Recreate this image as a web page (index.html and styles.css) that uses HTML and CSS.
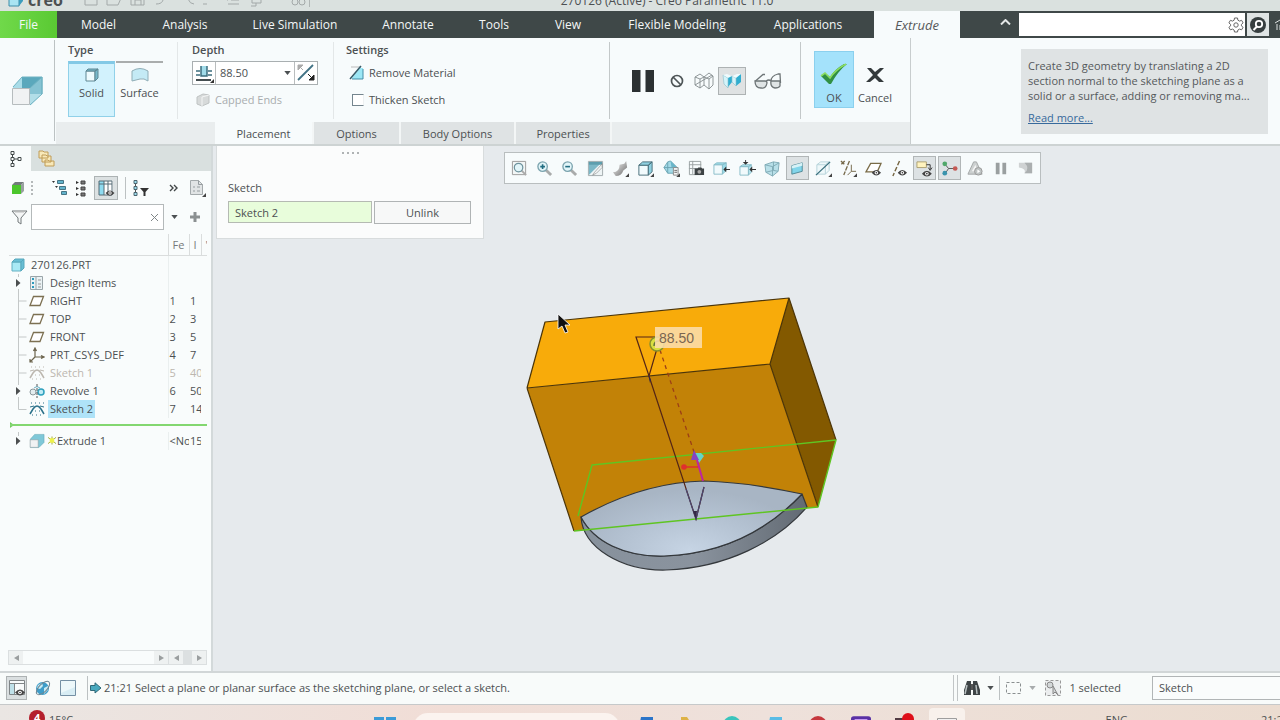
FILE: index.html
```html
<!DOCTYPE html>
<html lang="en">
<head>
<meta charset="utf-8">
<title>270126 (Active) - Creo Parametric 11.0</title>
<link rel="stylesheet" href="styles.css">
</head>
<body>
<svg class="defs" aria-hidden="true">
  <defs>
    <radialGradient id="steel" gradientUnits="userSpaceOnUse" cx="690" cy="550" r="120" gradientTransform="translate(0 275) scale(1 .5)"><stop offset="0" stop-color="#c6d4e4"/><stop offset=".6" stop-color="#b3c1d1"/><stop offset="1" stop-color="#a8b5c4"/></radialGradient>
    <linearGradient id="rim" x1="0" y1="0" x2="1" y2="0"><stop offset="0" stop-color="#87919c"/><stop offset=".5" stop-color="#8a939e"/><stop offset="1" stop-color="#626a73"/></linearGradient>
    <linearGradient id="chrome" x1="0" y1="0" x2="1" y2="1"><stop offset="0" stop-color="#fff"/><stop offset="1" stop-color="#666"/></linearGradient>
  </defs>
  <symbol id="plane" viewBox="0 0 16 14"><path d="M4.500 2.500h10l-3.500 9h-10z" fill="#fff" stroke="#7c7052" stroke-width="1.300"/></symbol>
  <symbol id="cube" viewBox="0 0 18 18"><path d="M2 5.500h10V16H2z" fill="#f2fbfd" stroke="#486d79"/><path d="M2 5.500L6 2h10l-4 3.500zM12 5.500L16 2v10.500L12 16z" fill="#8fd0e0" stroke="#486d79"/></symbol>
  <symbol id="sketch" viewBox="0 0 16 16"><path d="M1 13l3-5q4-6 8 0l3 5" fill="none" stroke="currentColor" stroke-width="1.500"/><path d="M1 6l4-1M11 5l4 1" stroke="currentColor"/><path d="M2 2h1M6 2h1M10 2h1M14 2h1M6 10h1M10 10h1M3 14h1M7 14h1M11 14h1" stroke="currentColor"/></symbol>
  <symbol id="caret" viewBox="0 0 8 5"><path d="M0 0h8L4 5z" fill="currentColor"/></symbol>
  <symbol id="eye" viewBox="0 0 12 8"><path d="M0 4Q6-3 12 4Q6 11 0 4z" fill="#444"/><circle cx="6" cy="4" r="2.200" fill="#fff"/><circle cx="6" cy="4" r="1" fill="#333"/></symbol>
  <symbol id="tee" viewBox="0 0 24 18"><path d="M9.500 0v18M9.500 9h8" stroke="#c4c8c8" fill="none"/></symbol>
  <symbol id="elbow" viewBox="0 0 24 18"><path d="M9.500 0v9.500h8" stroke="#c4c8c8" fill="none"/></symbol>
  <symbol id="branch" viewBox="0 0 24 18"><path d="M9.500 0v18" stroke="#c4c8c8"/><path d="M6 3h7v12H6z" fill="#f9fcfc"/><path d="M7 5l4.500 4L7 13z" fill="#4c4f50"/></symbol>
  <symbol id="trim" viewBox="0 0 24 18"><path d="M9.500 0v4" stroke="#c4c8c8"/><path d="M7 5l4.500 4L7 13z" fill="#4c4f50"/></symbol>
  <symbol id="zoomlens" viewBox="0 0 18 18"><path d="M10.500 10.500l5.500 5.500" stroke="#a9abab" stroke-width="3"/><circle cx="7" cy="7" r="5" fill="#e2f5f9" stroke="#7ba3ae" stroke-width="1.400"/></symbol>
</svg>

<header class="titlebar">
  <div class="brand">
    <svg width="16" height="14" viewBox="0 0 16 14"><path d="M1 5h10v8H1z" fill="#a9e4f2" stroke="#3e8da8"/><path d="M11 13l4-5V1l-4 4z" fill="#3d9dbd"/></svg>
    <span>creo</span>
  </div>
  <div class="quick">
    <svg width="224" height="14" viewBox="0 0 224 14" fill="none" stroke="#a3a9a9"><path d="M1 0h12v12H1zM23 0v12h11l4-9M47 0v12h13V0M51 12V7h6v5"/><path d="M72 11c7 0 8-4 7-10M110 11q-4 0-6-5M119 11h4M144 11h11M147 7h8M143 7h1M168 4h9v6h-9zM172 10v3h-5"/><circle cx="211" cy="9" r="3"/><circle cx="218" cy="9" r="3"/></svg>
  </div>
  <h1>270126 (Active) - Creo Parametric 11.0</h1>
</header>

<nav class="menubar" aria-label="Ribbon tabs">
  <button class="file">File</button>
  <button>Model</button>
  <button>Analysis</button>
  <button>Live Simulation</button>
  <button>Annotate</button>
  <button>Tools</button>
  <button>View</button>
  <button>Flexible Modeling</button>
  <button>Applications</button>
  <button class="current">Extrude</button>
  <div class="menu-right">
    <button class="collapse" aria-label="Minimize ribbon"><svg width="11" height="6" viewBox="0 0 11 6"><path d="M1 5.500L5.500 1 10 5.500" fill="none" stroke="#e3e6e6" stroke-width="2"/></svg></button>
    <div class="command-search">
      <input type="text" aria-label="Search commands">
      <svg width="16" height="16" viewBox="0 0 16 16" fill="none" stroke="#666"><path d="M6.500 1h3l.4 2.200 1.600.9 2.100-.8 1.500 2.600L13.400 7.400v1.500l1.700 1.400-1.500 2.500-2.100-.7-1.600.9L9.500 15h-3l-.4-2-1.600-.9-2.100.7L.9 10.300l1.700-1.400V7.400L.9 5.900l1.500-2.600 2.100.8 1.600-.9z"/><circle cx="8" cy="8" r="2.200"/></svg>
    </div>
    <button class="find" aria-label="Search"><svg width="18" height="18" viewBox="0 0 18 18"><circle cx="9" cy="9" r="8" fill="#363e3f"/><circle cx="10" cy="8" r="3.200" fill="none" stroke="#fff" stroke-width="1.800"/><path d="M8 10.500L4.500 14" stroke="#fff" stroke-width="2"/></svg></button>
    <svg class="learn" width="5" height="16" viewBox="0 0 5 16"><path d="M0 6l5-3h5M2 7v6M5 8h5v5H5z" stroke="#dde1e1" fill="none"/></svg>
  </div>
</nav>

<section class="ribbon">
  <div class="feature-icon">
    <svg width="32" height="34" viewBox="0 0 32 34"><path d="M11 3h20v17H11z" fill="#5ba8bc"/><path d="M2 13L11 3v17l-9 10z" fill="#a9dce8"/><path d="M11 20h20L20 31H2z" fill="#c9eaf1"/><path d="M31 3v17L19 31V14z" fill="#a3d6e3" fill-opacity=".6"/><path d="M2 13L11 3h20M19 14L31 3v17L19 31M31 3v17" fill="none" stroke="#6fb2c2"/><path d="M1.500 14.500h17v16h-17z" fill="#f0f2f3" stroke="#b6bcbe"/></svg>
  </div>
  <div class="ribbon-body">
    <div class="groups">
      <div class="group">
        <h2>Type</h2>
        <div class="types">
          <button class="type on"><svg width="16" height="16" viewBox="0 0 16 16"><path d="M2 4h9v10H2z" fill="#eefbfe" stroke="#5f8793"/><path d="M2 4l2-2h10l-3 2zM11 4l3-2v9l-3 3z" fill="#76b9cb" stroke="#5f8793"/></svg>Solid</button>
          <button class="type"><svg width="18" height="16" viewBox="0 0 18 16"><path d="M1 14V4q8-5 16 0v10q-4-3-8-2T1 14z" fill="#c4eaf5" stroke="#8fadb6"/></svg>Surface</button>
        </div>
      </div>
      <div class="group">
        <h2>Depth</h2>
        <div class="depth">
          <button aria-label="Depth option"><svg width="20" height="20" viewBox="0 0 20 20"><path d="M2 17h15" stroke="#454e51" stroke-width="2"/><path d="M7 3v10h6V3M2 8h4M2 12h4M14 8h4M14 12h4" fill="#a1dbe9" stroke="#3d6d7d" stroke-width="1.500"/><path d="M20 16v4h-4z" fill="#333"/></svg></button>
          <input type="text" aria-label="Depth value" value="88.50">
          <button class="drop" aria-label="Recent values"><svg width="7" height="4"><use href="#caret"/></svg></button>
          <button aria-label="Flip direction"><svg width="20" height="20" viewBox="0 0 20 20"><path d="M2 17L17 2" stroke="#427386" stroke-width="1.800"/><path d="M2 2h5L2 7zM3 3l4 4" fill="#aaa" stroke="#aaa"/><path d="M18 17h-5l5-5zM12 11l5 5" fill="#222" stroke="#222"/></svg></button>
        </div>
        <button class="capped" disabled><svg width="14" height="14" viewBox="0 0 14 14"><path d="M1 4l6-3 6 1v8l-7 3-5-2z" fill="#d7dada" stroke="#bfc3c3"/><path d="M6 4v9M6 4l7-2" stroke="#f4f5f5"/></svg>Capped Ends</button>
      </div>
      <div class="group settings">
        <h2>Settings</h2>
        <button class="remove"><svg width="16" height="16" viewBox="0 0 16 16"><path d="M2 2h10" stroke="#bbb"/><path d="M3 13L11 3h3v11H3z" fill="#9ce7f5"/><path d="M3 14h11V4" fill="none" stroke="#458da6"/><path d="M1 14L12 1" stroke="#365b69" stroke-width="1.500"/></svg>Remove Material</button>
        <label class="thicken"><input type="checkbox">Thicken Sketch</label>
      </div>
      <div class="group preview">
        <button aria-label="Pause"><svg width="22" height="22" viewBox="0 0 22 22"><path d="M0 0h8.500v22H0zM13.500 0H22v22h-8.500z" fill="#2b3032"/></svg></button>
        <button aria-label="No preview"><svg width="14" height="14" viewBox="0 0 14 14" fill="none" stroke="#4e5557" stroke-width="1.700"><circle cx="7" cy="7" r="5.500"/><path d="M3 3l8 8"/></svg></button>
        <button aria-label="Unattached"><svg width="20" height="18" viewBox="0 0 20 18" fill="none" stroke="#858c8f" stroke-width=".9"><path d="M1 5l5-3 4 3v8l-4 3-5-3zM1 5l5 2 4-2M6 7v9M10 5l5 2 4-3-4-3-5 4M15 7v10l4-4V4M10 13l5 4M1 13l17-10"/></svg></button>
        <button class="on" aria-label="Attached"><svg width="20" height="18" viewBox="0 0 20 18"><path d="M1 3l9 1v6l-4 5V7zM11 4l8-2v8l-5 4V6z" fill="#30aed0"/><path d="M1 3l5 3v10l-4-4zM10 4l4 2v8l-4-4z" fill="#d5f4fa" stroke="#8bbdca" stroke-width=".6"/><path d="M1 3l4-1 5 2-4 2zM10 4l5-2h4l-5 4z" fill="#f1fbfd"/></svg></button>
        <button aria-label="Verify"><svg width="28" height="18" viewBox="0 0 28 18" fill="none" stroke="#6e7577" stroke-width="1.300"><path d="M1.500 9L9 2.500h2M17 9q0-5 7-7h2l.5 9"/><path d="M1 9h10q2 0 2 2-1 6-6 5-6 0-6-7zM17 9h9v5q-1 2-5 2-5-1-4-7zM12 9q3-2 5 0" fill="#dfe4e5"/></svg></button>
      </div>
      <div class="group confirm">
        <button class="on"><svg width="28" height="22" viewBox="0 0 28 22"><path d="M1 13l4-3 5 4q5-8 14-13h3Q18 8 11 21H9z" fill="#319044"/><path d="M1 13l4-3 5 5Q15 7 26 1" fill="none" stroke="#8bdc61" stroke-width="1.600"/></svg>OK</button>
        <button><svg width="20" height="20" viewBox="0 0 20 20"><path d="M2 3h4l4 4 5-4h4l-7 7 7 7h-5l-4-4-5 4H1l7-7z" fill="#33393b"/></svg>Cancel</button>
      </div>
    </div>
    <div class="dash-tabs">
      <button class="on">Placement</button><button>Options</button><button>Body Options</button><button>Properties</button>
    </div>
  </div>
  <div class="ribbon-help">
    <div class="help-card">
      <p>Create 3D geometry by translating a 2D<br>section normal to the sketching plane as a<br>solid or a surface, adding or removing ma...</p>
      <a href="#">Read more...</a>
    </div>
  </div>
</section>

<main class="workspace">
  <aside class="navigator">
    <div class="nav-tabs">
      <button class="on" aria-label="Model tree"><svg width="14" height="18" viewBox="0 0 14 18" fill="none" stroke="#424849"><path d="M2 1.500h3v3H2zM2 7.500h3v3H2zM2 13.500h3v3H2zM9 7.500h3v3H9zM3.500 5v2M3.500 11v2M5 9h4"/></svg></button>
      <button aria-label="Folder browser"><svg width="18" height="18" viewBox="0 0 18 18" fill="#f7e8b9" stroke="#c09c57"><path d="M1 3V1h4l1 1h4v6H1zM4 8V5h4l1 1h4v6H4zM7 13v-3h3l1 1h5v5H7z"/></svg></button>
    </div>
    <div class="nav-tools">
      <svg width="14" height="16" viewBox="0 0 14 16"><path d="M1 5h9v9H1z" fill="#4cc62c"/><path d="M1 5l3-3h9l-3 3z" fill="#737b7b"/><path d="M10 5l3-3v9l-3 3z" fill="#99a0a0"/></svg>
      <span class="grip"></span>
      <button aria-label="Expand"><svg width="18" height="18" viewBox="0 0 18 18"><path d="M1 2h3L2.500 4zM4 7h3L5.500 9z" fill="#333"/><path d="M6.500 1.500h6v3h-6zM8.500 7.500h6v3h-6zM10.500 12.500h5v3h-5z" fill="#62b3cc" stroke="#477584"/></svg></button>
      <button aria-label="Collapse"><svg width="12" height="18" viewBox="0 0 12 18"><path d="M1 2l3 1.500L1 5zM1 8l3 1.500L1 11zM1 14l3 1.500L1 17z" fill="#333"/><path d="M6 2h4v3H6zM6 8h4v3H6zM6 14h4v3H6z" fill="#777" stroke="#444"/></svg></button>
      <button class="on" aria-label="Tree columns"><svg width="18" height="18" viewBox="0 0 18 18"><path d="M2 2h14v14H2z" fill="#fff"/><path d="M2 2h5v14H2z" fill="#8edbf0"/><path d="M2 2h13v14H2zM2 5h13M7 2v14M11 2v14" fill="none" stroke="#546b75"/><use href="#eye" x="8" y="11" width="10" height="6"/></svg></button>
      <span class="rule"></span>
      <button aria-label="Tree filters"><svg width="18" height="18" viewBox="0 0 18 18"><path d="M3.500 4v9" stroke="#555"/><path d="M2 1.500h3v3H2zM2 7.500h3v3H2zM2 13.500h3v3H2z" fill="#9cdced" stroke="#4c656f"/><path d="M8 9h9l-3.500 4v4h-2v-4z" fill="#333"/></svg></button>
      <button class="more" aria-label="More"><svg width="10" height="8" viewBox="0 0 10 8" fill="none" stroke="#434849" stroke-width="1.400"><path d="M1 1l3 3-3 3M5 1l3 3-3 3"/></svg></button>
      <button aria-label="Report"><svg width="17" height="18" viewBox="0 0 17 18"><path d="M1.500 1.500h8l4 4v10h-12z" fill="#e1e4e5" stroke="#a4aaac"/><path d="M9.500 1.500v4h4M4 8h2M8 8h3M4 12h2M8 12h3" stroke="#969da0" fill="none"/><path d="M17 14v4h-4z" fill="#444"/></svg></button>
    </div>
    <div class="nav-filter">
      <svg width="17" height="17" viewBox="0 0 17 17" fill="#f4f6f6" stroke="#73797b"><path d="M1 2h15l-6 7v6l-3-2V9z"/><path d="M4 3h9" stroke="#bbb"/></svg>
      <div class="filter-box">
        <input type="text" aria-label="Filter tree">
        <button aria-label="Clear"><svg width="9" height="9" viewBox="0 0 9 9"><path d="M1 1l7 7M8 1L1 8" stroke="#808688"/></svg></button>
      </div>
      <button aria-label="Filter options"><svg width="7" height="4"><use href="#caret"/></svg></button>
      <button aria-label="Add"><svg width="12" height="12" viewBox="0 0 12 12"><path d="M4.500 1h3v3.500H11v3H7.500V11h-3V7.500H1v-3h3.500z" fill="#8b9091"/></svg></button>
    </div>
    <table class="tree">
      <colgroup><col class="c-name"><col class="c-feat"><col class="c-id"><col class="c-rest"></colgroup>
      <thead><tr><th aria-label="Name"></th><th>Fe</th><th>I</th><th>'</th></tr></thead>
      <tbody>
        <tr><td><span class="node root"><svg width="16" height="16" viewBox="0 0 16 16"><path d="M2 5h9v9H2z" fill="#a9e9f5" stroke="#65b0c2"/><path d="M2 5l3-3h9l-3 3zM11 5l3-3v9l-3 3z" fill="#69bed4" stroke="#59a9bd"/></svg><span>270126.PRT</span></span></td><td></td><td></td><td></td></tr>
        <tr><td><span class="node"><svg width="24" height="18"><use href="#branch"/></svg><svg width="16" height="16" viewBox="0 0 16 16"><path d="M1.500 1.500h12v13h-12z" fill="#eaf2f4" stroke="#9aa5a9"/><path d="M4 3v11" stroke="#2f9abc" stroke-width="2" stroke-dasharray="2 2"/><path d="M7 2v12" stroke="#9aa5a9"/><path d="M9 5h3M9 9h3M9 12h3" stroke="#999"/></svg><span>Design Items</span></span></td><td></td><td></td><td></td></tr>
        <tr><td><span class="node"><svg width="24" height="18"><use href="#tee"/></svg><svg width="16" height="14"><use href="#plane"/></svg><span>RIGHT</span></span></td><td>1</td><td>1</td><td></td></tr>
        <tr><td><span class="node"><svg width="24" height="18"><use href="#tee"/></svg><svg width="16" height="14"><use href="#plane"/></svg><span>TOP</span></span></td><td>2</td><td>3</td><td></td></tr>
        <tr><td><span class="node"><svg width="24" height="18"><use href="#tee"/></svg><svg width="16" height="14"><use href="#plane"/></svg><span>FRONT</span></span></td><td>3</td><td>5</td><td></td></tr>
        <tr><td><span class="node"><svg width="24" height="18"><use href="#tee"/></svg><svg width="16" height="16" viewBox="0 0 16 16"><path d="M6 1v9h9M6 10l-5 5M4.500 4L6 1l1.500 3M12 8.500l3 1.500-3 1.500M1 12v3h3" fill="none" stroke="#6c644d" stroke-width="1.200"/></svg><span>PRT_CSYS_DEF</span></span></td><td>4</td><td>7</td><td></td></tr>
        <tr class="suppressed"><td><span class="node"><svg width="24" height="18"><use href="#tee"/></svg><svg width="16" height="16"><use href="#sketch"/></svg><span>Sketch 1</span></span></td><td>5</td><td>40</td><td></td></tr>
        <tr><td><span class="node"><svg width="24" height="18"><use href="#branch"/></svg><svg width="16" height="16" viewBox="0 0 16 16"><circle cx="4" cy="9" r="3" fill="#e4edef" stroke="#8b989c"/><circle cx="12" cy="9" r="3" fill="#bfeaf5" stroke="#2ea0bd" stroke-width="1.500"/><path d="M8 1v14" stroke="#555" stroke-dasharray="3 1"/><path d="M5 5q3-3 6 0" fill="none" stroke="#6badc0"/></svg><span>Revolve 1</span></span></td><td>6</td><td>50</td><td></td></tr>
        <tr class="selected"><td><span class="node"><svg width="24" height="18"><use href="#elbow"/></svg><svg width="16" height="16"><use href="#sketch"/></svg><span>Sketch 2</span></span></td><td>7</td><td>14</td><td></td></tr>
        <tr class="insert"><td colspan="4"><svg width="100%" height="6"><path d="M1 0l4 3-4 3z" fill="#72c95f"/><rect x="1" y="2" width="100%" height="2" fill="#83d770"/></svg></td></tr>
        <tr><td><span class="node"><svg width="24" height="18"><use href="#trim"/></svg><svg width="16" height="16" viewBox="0 0 32 34"><path d="M2 13L11 3h20v17L20 31H2z" fill="#7fc8d8" stroke="#559fae"/><path d="M1.500 14.500h17v16h-17z" fill="#f0f2f3" stroke="#8d9496"/></svg><svg class="fresh" width="8" height="9" viewBox="0 0 9 9"><path d="M0 1l9 7M9 1L0 8M4.500 0v9" stroke="#9aa22c"/><path d="M2 2h5v5H2z" fill="#eef24a"/></svg><span>Extrude 1</span></span></td><td class="wide">&lt;No</td><td>153</td><td></td></tr>
      </tbody>
    </table>
    <div class="nav-scroll">
      <div class="scroll"><button aria-label="Scroll names left"><i class="left"></i></button><span></span><button aria-label="Scroll names right"><i class="right"></i></button></div>
      <div class="scroll short"><button aria-label="Scroll columns left"><i class="left"></i></button><span></span><button aria-label="Scroll columns right"><i class="right"></i></button></div>
    </div>
  </aside>

  <section class="canvas" aria-label="Graphics area">
    <svg class="model" viewBox="213 146 1067 525">
      <g stroke-linejoin="round">
        <path d="M545 322L789 298L770 364L527 388z" fill="#f8ab0a"/>
        <path d="M527 388L770 364L818 507L574 531z" fill="#c28207"/>
        <path d="M789 298L836 440L818 507L770 364z" fill="#835900"/>
        <path d="M527 388L545 322L789 298L836 440M527 388L770 364L789 298M527 388L574 531M770 364L818 507" fill="none" stroke="#4c3508" stroke-width="1.200"/>
        <path d="M581 517C583 548 622 571 666 570C726 568 777 542 807 507L802 494C766 532 720 554 664 556C625 557 594 542 581 517z" fill="url(#rim)" stroke="#34383c" stroke-width="1.200"/>
        <path d="M581 517C620 495 660 482 704 481C737 482 770 487 802 494C766 532 720 554 664 556C625 557 594 542 581 517z" fill="url(#steel)" stroke="#34383c" stroke-width="1.200"/>
        <path d="M574 531L818 507L836 440L592 465L578 516" fill="none" stroke="#5fc522" stroke-width="1.400"/>
      </g>
      <path d="M655 337H636L649 376L658 345M649 376L696 519L704 487" fill="none" stroke="#542516" stroke-width="1.200"/>
      <path d="M686 489L696 519L704 487" fill="none" stroke="#4a4670" stroke-width="1.200"/>
      <path d="M648 374l2 9 1-3zM693 511l3 8 1-8z" fill="#342846"/>
      <path d="M660 350L695 455" stroke="#9c3f16" stroke-width="1.300" stroke-dasharray="4 4" fill="none"/>
      <path d="M684 467h14" stroke="#df302d" stroke-width="1.500"/><circle cx="684" cy="467" r="2.800" fill="#df302d"/>
      <path d="M694 453h7l3 3-5 7z" fill="#65d5c6"/><path d="M697 460l6 21" stroke="#bd24a0" stroke-width="2"/><path d="M694 450l-3 10h8z" fill="#8644c3"/>
      <circle cx="657" cy="344" r="7" fill="#d9df42" stroke="#87902b" stroke-width="1.500"/><path d="M654 346q0-5 5-5" fill="none" stroke="#64733c" stroke-width="1.500"/>
      <path d="M655 327h47v21h-47z" fill="#fbddac" fill-opacity=".88"/>
      <text x="659" y="343" class="dimension">88.50</text>
      <path d="M558 314v15l4-3 3 7 3-1-3-7h5z" fill="#111" stroke="#fff" stroke-width=".8"/>
    </svg>
    <form class="placement">
      <div class="dots"><i></i><i></i><i></i><i></i></div>
      <label for="sketch-ref">Sketch</label>
      <div class="pick"><input id="sketch-ref" type="text" value="Sketch 2"><button type="button">Unlink</button></div>
    </form>
    <div class="view-tools">
      <button aria-label="Refit"><svg viewBox="0 0 18 18"><path d="M1.500 1.500h14v14h-14z" fill="#f2f6f6" stroke="#999"/><path d="M11 11l5 5" stroke="#aaa" stroke-width="2"/><circle cx="8" cy="8" r="4.500" fill="#e2f5f9" stroke="#6d929d" stroke-width="1.300"/></svg></button>
      <button aria-label="Zoom in"><svg viewBox="0 0 18 18"><use href="#zoomlens"/><path d="M4.500 7h5M7 4.500v5" stroke="#226d82" stroke-width="1.700"/></svg></button>
      <button aria-label="Zoom out"><svg viewBox="0 0 18 18"><use href="#zoomlens"/><path d="M4.500 7h5" stroke="#226d82" stroke-width="1.700"/></svg></button>
      <button aria-label="Repaint"><svg viewBox="0 0 18 18"><path d="M1.500 1.500h15v15h-15z" fill="#eef4f5" stroke="#a0aaac"/><path d="M2 2h14L2 16z" fill="#7db8c7"/><path d="M2 2h14v3H2z" fill="#5d9eae"/><path d="M16 4l-8 9-2 3 4-2 6-6z" fill="#f2f5f5" stroke="#666" stroke-width=".5"/></svg></button>
      <button aria-label="Rendering"><svg viewBox="0 0 18 18"><path d="M1 13q7 0 7-8l5-1 2-3 1 7-4 3q-2 6-8 6z" fill="url(#chrome)"/><path d="M18 14v4h-4z" fill="#444"/></svg></button>
      <button aria-label="Display style"><svg viewBox="0 0 18 18"><use href="#cube"/><path d="M18 14v4h-4z" fill="#444"/></svg></button>
      <button aria-label="Saved orientations"><svg viewBox="0 0 18 18"><path d="M1 8l4-6 3-1 7 7-2 6H5z" fill="#a3dae7" stroke="#6ba5b3"/><path d="M8 1l7 7H9z" fill="#69b5c8"/><path d="M1 8h14M5 2v6M5 8v6" stroke="#6ba5b3"/><path d="M11 8h5v8h-5z" fill="#f5f6f6" stroke="#888"/><path d="M12 11h3M12 13h3" stroke="#666"/><path d="M18 14v4h-4z" fill="#444"/></svg></button>
      <button aria-label="View manager"><svg viewBox="0 0 18 18"><path d="M1.500 1.500h12v14h-12zM1 5h13M1 9h13M5 1v14" fill="none" stroke="#9aa1a3"/><path d="M7 9h3l1-1h3l1 1h2v7H7z" fill="#3d4345"/><circle cx="12" cy="12.500" r="2" fill="#aaa"/></svg></button>
      <button aria-label="Section"><svg viewBox="0 0 18 18"><path d="M1 5h9v10H1z" fill="#f1fafc" stroke="#89bdc9"/><path d="M1 5l3-2h10l-4 2zM10 5l4-2v8l-4 4z" fill="#9bdbe9" stroke="#89bdc9"/><path d="M14 7v6l-3-3zM13 9.500h5v1h-5z" fill="#333"/></svg></button>
      <button aria-label="Active annotation"><svg viewBox="0 0 18 18"><path d="M1 7h9v9H1z" fill="#f1fafc" stroke="#89bdc9"/><path d="M1 7l3-2h9l-3 2zM10 7l3-2v8l-3 3z" fill="#b3e3ed" stroke="#89bdc9"/><path d="M6.500 0h1v2H10L7 5 4 2h2.500zM14 7v6l-3-3zM13 9.500h5v1h-5z" fill="#333"/></svg></button>
      <button aria-label="Perspective"><svg viewBox="0 0 18 18"><path d="M1 5l9-3 6 1-1 9-6 5-7-4z" fill="#b9e0e9" stroke="#7fabb6"/><path d="M1 5l8 2v10M9 7l7-4M10 2v9l-8 2M10 11l5 1" fill="none" stroke="#7fabb6"/></svg></button>
      <button class="on" aria-label="Plane fill"><svg viewBox="0 0 18 18"><path d="M3 6l11-3v9L3 15z" fill="#82d5ea" stroke="#508896"/><path d="M3 6l11-3v3L3 9z" fill="#d7f2f7"/></svg></button>
      <button aria-label="Model edges"><svg viewBox="0 0 18 18"><path d="M2 5h9v10H2zM2 5l4-3h9l-4 3M15 2v9l-4 4" fill="#eef8fa" stroke="#b6d3da"/><path d="M1 16L16 2" stroke="#386e7c" stroke-width="1.400"/><path d="M18 14v4h-4z" fill="#444"/></svg></button>
      <button aria-label="Datum filters"><svg viewBox="0 0 18 18"><path d="M1 1l4 4M5 1L1 5M10 1L4 16" stroke="#756849" stroke-width="1.400" stroke-dasharray="5 1"/><path d="M12 5v7h5M12 12l-4 4" stroke="#756849" fill="none"/><path d="M18 14v4h-4z" fill="#444"/></svg></button>
      <button aria-label="Plane display"><svg viewBox="0 0 18 18"><path d="M6 3.500h11l-4 9H1z" fill="#fff" stroke="#7a6c48" stroke-width="1.400"/><use href="#eye" x="7" y="10" width="10" height="7"/></svg></button>
      <button aria-label="Axis display"><svg viewBox="0 0 18 18"><path d="M9 1L2 17" stroke="#756541" stroke-width="1.500" stroke-dasharray="5 2"/><use href="#eye" x="7" y="10" width="10" height="7"/></svg></button>
      <button class="on" aria-label="Annotation display"><svg viewBox="0 0 18 18"><path d="M1 2h10v6H1z" fill="#fff3be" stroke="#ab9f72"/><path d="M11 5h4v5M13 8l2 3 2-3" fill="none" stroke="#333"/><use href="#eye" x="6" y="11" width="11" height="7"/></svg></button>
      <button class="on" aria-label="Spin center"><svg viewBox="0 0 18 18"><path d="M3 3l5 6-4 6M8 9h7" stroke="#555" fill="none"/><circle cx="4" cy="4" r="2.500" fill="#50a86b"/><circle cx="4" cy="14" r="2.500" fill="#3a94ad"/><circle cx="15" cy="9" r="2.500" fill="#c45a55"/></svg></button>
      <button disabled aria-label="Simulate"><svg viewBox="0 0 18 18"><path d="M1 15L7 2h3l6 13z" fill="#ccd0d0" stroke="#a1a6a6"/><path d="M5 12l4-7 2 7z" fill="#f3f4f4"/><circle cx="12" cy="12" r="4" fill="#bfc4c4" stroke="#999"/><path d="M11 10l3 2-3 2z" fill="#fff"/></svg></button>
      <button disabled aria-label="Pause simulation"><svg viewBox="0 0 18 18"><path d="M4 3h4v12H4zM11 3h4v12h-4z" fill="#9a9fa0"/></svg></button>
      <button disabled aria-label="Results"><svg viewBox="0 0 18 18"><path d="M2 3h14v11H8q2-5-6-6z" fill="#cfd2d3"/><path d="M8 3h8v11H8q6-5 0-11z" fill="#abafb0"/></svg></button>
    </div>
  </section>
</main>

<footer class="status">
  <button class="on" aria-label="Navigator"><svg width="18" height="18" viewBox="0 0 18 18"><path d="M1.500 1.500h15v14h-15z" fill="#f8fbfb" stroke="#7f8587"/><path d="M1.500 4.500h15M6.500 4.500v11" stroke="#7f8587"/><path d="M2 5h4v10H2z" fill="#bfe1e9"/><use href="#eye" x="7" y="10" width="10" height="7"/></svg></button>
  <button aria-label="Browser"><svg width="18" height="18" viewBox="0 0 18 18"><circle cx="8.500" cy="9.500" r="6.500" fill="#3f9dc9"/><path d="M4 6l4-2 1 3-3 3-3-1zM10 9l4-2v4l-4 4z" fill="#c9ecf4"/><ellipse cx="9" cy="9" rx="8.500" ry="4" transform="rotate(-45 9 9)" fill="none" stroke="#6e8590"/></svg></button>
  <button aria-label="Full screen"><svg width="18" height="18" viewBox="0 0 18 18"><path d="M1.500 1.500h15v15h-15z" fill="#d8edf4" stroke="#7590a4"/><path d="M2 2h14v6L2 14z" fill="#edf8fa"/></svg></button>
  <span class="rule"></span>
  <svg width="12" height="12" viewBox="0 0 12 12"><path d="M.500 3.500H5V.800L11 6l-6 5V8.500H.500z" fill="#48a9be" stroke="#306979"/></svg>
  <p>21:21 Select a plane or planar surface as the sketching plane, or select a sketch.</p>
  <div class="selection">
    <span class="double-rule"></span>
    <button aria-label="Find"><svg width="18" height="18" viewBox="0 0 18 18"><path d="M4 2h4v14H1v-5zM10 2h4l3 9v5h-7z" fill="#3e4446"/><path d="M8 5h2v6H8z" fill="#555"/><path d="M4 6L2 15M13 6l1 9" stroke="#b8c0c1" stroke-width="1.500"/></svg><svg width="7" height="4"><use href="#caret"/></svg></button>
    <span class="rule"></span>
    <button aria-label="Box selection" class="dim"><svg width="18" height="16" viewBox="0 0 18 16"><path d="M1.500 2.500h14v11h-14z" fill="none" stroke="#8a8f90" stroke-dasharray="3 2"/></svg><svg width="7" height="4"><use href="#caret"/></svg></button>
    <svg width="18" height="18" viewBox="0 0 18 18"><path d="M1.500 1.500h15v15h-15z" fill="#ebedee" stroke="#999" stroke-dasharray="3 2"/><circle cx="6" cy="6" r="3" fill="#d3d7d8" stroke="#888"/><path d="M9 7v8l2-2 3 3z" fill="#d3d7d8" stroke="#888"/></svg>
    <span class="count">1 selected</span>
    <select aria-label="Selection filter"><option>Sketch</option></select>
  </div>
</footer>

<div class="taskbar">
  <div class="weather"><svg width="20" height="18" viewBox="0 0 20 18"><path d="M0 12h8v6H0z" fill="#77649e"/><circle cx="12" cy="8" r="8" fill="#b4202d"/><text x="9" y="12" class="badge">4</text></svg><span>15°C</span></div>
  <svg class="start" width="24" height="16" viewBox="0 0 24 16"><path d="M1 5h10v11H1zM13 5h10v11H13z" fill="#3b9bd8"/></svg>
  <div class="search-pill"></div>
  <div class="apps">
    <svg viewBox="0 0 20 16"><path d="M5 5h12v11H3z" fill="#2b74c9"/></svg>
    <svg viewBox="0 0 20 16"><path d="M2 5h6l2 3h7v8H2z" fill="#deb246"/></svg>
    <svg viewBox="0 0 20 16"><circle cx="10" cy="13" r="9" fill="#3ac4bc"/></svg>
    <svg viewBox="0 0 20 16"><path d="M5 5h12v11H3z" fill="#59bce6"/></svg>
    <svg viewBox="0 0 20 16"><circle cx="10" cy="13" r="9" fill="#c5373d"/></svg>
    <svg viewBox="0 0 22 16"><rect y="4" width="22" height="16" rx="3" fill="#5930a5"/><path d="M5 8h12v8H5z" fill="none" stroke="#c59af0" stroke-width="2"/></svg>
    <svg viewBox="0 0 20 16"><path d="M1 6h12v10H1z" fill="#513b44"/><circle cx="14" cy="7" r="6" fill="#de0e19"/></svg>
    <span class="app-on"><svg viewBox="0 0 22 16"><path d="M.500 6.500h21V18H.500z" fill="#fff" stroke="#888"/></svg></span>
  </div>
  <span class="lang">ENG</span>
  <span class="clock">21:21</span>
</div>
</body>
</html>
```
FILE: styles.css
```css
* { box-sizing: border-box; }
body {
  margin: 0;
  height: 100vh;
  display: flex;
  flex-direction: column;
  overflow: hidden;
  background: #e6eaed;
  color: #4c5052;
  font: 11px/16px "Open Sans", "Noto Sans", sans-serif;
}
h1, h2, p { margin: 0; font-size: inherit; font-weight: inherit; }
button, input, select { font: inherit; color: inherit; }
button {
  display: flex;
  align-items: center;
  justify-content: center;
  margin: 0;
  padding: 0;
  border: 0;
  background: none;
}
input { min-width: 0; margin: 0; outline: 0; }
svg { display: block; flex: none; }
.defs { position: absolute; width: 0; height: 0; }

/* Title bar */
.titlebar {
  flex: none;
  height: 11px;
  display: grid;
  grid-template-columns: 84px 226px 1fr 226px 80px;
  grid-template-rows: 100%;
  align-items: end;
  overflow: hidden;
  background: #dae1df;
  padding-bottom: 4px;
}
.brand { display: flex; align-items: flex-end; gap: 4px; padding-left: 8px; font-weight: 700; font-size: 16px; line-height: 14px; }
.quick { border-right: 1px solid #b0b6b5; }
.titlebar h1 { grid-column: 3 / 4; text-align: center; font-size: 12px; line-height: 12px; padding-left: 50px; }

/* Ribbon tabs */
.menubar {
  flex: none;
  height: 27px;
  display: grid;
  grid-template-columns: 57px 83px 90px 130px 96px 76px 72px 146px 124px 86px 1fr;
  background: #3f4848;
  color: #f4f7f7;
  font-size: 12px;
}
.menubar button { padding-top: 1px; }
.menubar .file { background: linear-gradient(90deg, #70d94a, #5ac933); }
.menubar button:nth-child(9) { padding-right: 8px; }
.menubar .current { background: #f7fbfc; color: #56595b; font-size: 13px; font-style: italic; }
.menu-right { display: flex; justify-content: flex-end; align-items: center; gap: 2px; }
.menubar .collapse { width: 24px; height: 20px; align-self: flex-start; }
.command-search { display: flex; align-items: center; width: 226px; height: 23px; padding-right: 1px; background: #fff; }
.command-search input { flex: 1; border: 0; background: none; }
.find { width: 22px; height: 23px; background: #dfe4e4; }
.learn { margin-left: 4px; }

/* Ribbon */
.ribbon { flex: none; height: 108px; display: flex; background: #f7fbfc; border-bottom: 2px solid #cdd3d3; }
.feature-icon { width: 55px; margin: 2px 1px 3px 0; display: grid; place-items: center; border-right: 1px solid #bcc2c3; }
.ribbon-body { width: 855px; display: flex; flex-direction: column; border-right: 1px solid #c8cdce; }
.groups { flex: 1; display: grid; grid-template-columns: 122px 156px 276px 191px 1fr; padding: 4px 0 3px; }
.group { border-right: 1px solid #e3e7e8; padding-left: 12px; }
.group:nth-child(2) { padding-left: 14px; }
.group:nth-child(n+3) { border-color: #c3c8c9; }
.group:last-child { border: 0; }
.group h2 { font-weight: 600; margin-bottom: 3px; }
.types { display: flex; gap: 1px; }
.type { width: 47px; height: 56px; flex-direction: column; justify-content: flex-start; gap: 2px; padding-top: 4px; border-top: 2px solid #aaadad; }
.type.on { background: #d2f2fd; border: 1px solid #91d1e9; border-top: 3px solid #83c9e6; padding-top: 3px; }
.depth { display: grid; grid-template-columns: 22px 1fr 14px 23px; width: 126px; height: 24px; border: 1px solid #a9afb1; background: #fff; }
.depth input { border: 0; border-left: 1px solid #b9bdbe; padding: 0 4px; background: none; }
.depth .drop + button { border-left: 1px solid #b9bdbe; }
.capped { gap: 5px; margin: 7px 0 0 4px; height: 16px; color: #a9adaf; }
.settings { padding-left: 12px; }
.remove { gap: 4px; height: 24px; padding-left: 3px; }
.thicken { display: flex; align-items: center; gap: 5px; height: 30px; padding-left: 6px; }
.thicken input { appearance: none; width: 12px; height: 12px; border: 1px solid #74858e; border-right-color: #eef1f2; background: #fff; }
.preview { display: flex; align-items: center; gap: 8px; padding-left: 22px; }
.preview button:first-child { margin-right: 8px; }
.preview button:nth-child(3) { margin-left: 2px; }
.preview .on { width: 28px; height: 28px; margin: 0 0 0 -4px; border: 1px solid #adb2b3; background: #dfe2e3; }
.confirm { display: flex; gap: 1px; padding: 9px 0 0 13px; }
.confirm button { width: 40px; height: 57px; flex-direction: column; justify-content: flex-end; gap: 5px; padding-bottom: 2px; }
.confirm .on { background: #a4e2fb; border: 1px solid #8bd0ee; padding-bottom: 1px; }
.dash-tabs { flex: none; height: 22px; display: flex; padding-left: 159px; background: #e9edee; }
.dash-tabs button { width: 99px; padding-top: 2px; background: #dfe3e4; border-right: 2px solid #f3f6f6; }
.dash-tabs .on { background: #f7fbfc; }
.dash-tabs button:nth-child(2) { width: 87px; }
.dash-tabs button:nth-child(3) { width: 115px; }
.dash-tabs button:nth-child(4) { width: 96px; }
.ribbon-help { flex: 1; display: flex; justify-content: flex-end; padding: 11px 12px 0; }
.help-card { width: 247px; height: 85px; padding: 9px 7px; background: #dfe3e4; line-height: 15px; color: #55595b; white-space: nowrap; }
.help-card a { display: block; margin-top: 7px; color: #376a9c; }

/* Workspace */
.workspace { flex: 1; min-height: 0; display: grid; grid-template-columns: 213px 1fr; }
.navigator { display: flex; flex-direction: column; min-height: 0; background: #f9fcfc; border-right: 2px solid #d3d9da; }
.nav-tabs { flex: none; display: flex; height: 25px; background: #d9e0df; }
.nav-tabs button { width: 31px; padding-left: 1px; }
.nav-tabs .on { background: #f9fcfc; }
.nav-tools { flex: none; display: flex; align-items: center; gap: 6px; height: 33px; padding: 0 5px 0 11px; }
.nav-tools .on { width: 24px; height: 24px; margin: 0 1px; border: 1px solid #adb3b4; background: #dce1e2; }
.grip { width: 2px; height: 14px; margin: 0 12px 0 0; border-left: 2px dotted #b5b9ba; }
.rule { width: 1px; height: 22px; background: #bcc1c2; }
.nav-tools .more { margin-left: auto; margin-right: 4px; }
.nav-filter { flex: none; display: flex; align-items: center; gap: 7px; height: 26px; padding-left: 11px; }
.nav-filter > svg + .filter-box { margin-left: -4px; }
.filter-box { display: flex; width: 133px; height: 26px; border: 1px solid #b4b9ba; background: #fff; }
.filter-box input { flex: 1; border: 0; background: none; }
.filter-box button { width: 18px; }
.nav-filter button + button { margin-left: 4px; }

.tree { flex: none; table-layout: fixed; width: 198px; margin: 4px 0 0 9px; border-collapse: collapse; white-space: nowrap; }
.c-name { width: 159px; }
.c-feat { width: 21px; }
.c-id { width: 12px; }
.tree th { height: 21px; padding: 2px 0 0 4px; font-weight: 400; text-align: left; overflow: hidden; color: #75797a; border-bottom: 1px solid #dadddd; border-left: 1px solid #dadddd; }
.tree th:first-child { border-left: 0; }
.tree td { height: 18px; padding: 0 0 0 1px; line-height: 18px; overflow: hidden; }
.tree td:first-child { padding: 0; }
.tree td:nth-child(2) { border-left: 1px solid #eaefef; }
.node { display: flex; align-items: center; height: 18px; }
.node svg + svg { margin-right: 3px; margin-left: -4px; }
.node > span { padding: 0 2px; }
.root { margin-left: 1px; }
.root > svg { margin-right: 3px; }
.suppressed { color: #bcb7af; }
.selected svg + svg { color: #2b718a; }
.selected .node > span { background: #afe3f8; }
.tree .insert td { height: 14px; padding: 0; vertical-align: middle; }
.node .fresh { margin: 0 -1px 0 0; }
.nav-scroll { display: flex; margin: auto 4px 6px 8px; height: 15px; }
.scroll { display: grid; grid-template-columns: 14px 1fr 14px; flex: 1; border: 1px solid #dbdfe0; }
.scroll button { background: #eef1f1; }
.scroll.short { flex: none; width: 38px; border-left: 0; }
.scroll.short span { background: #dce0e1; }
.left, .right { border: 3px solid transparent; }
.left { border-left: 0; border-right: 5px solid #9a9e9f; }
.right { border-right: 0; border-left: 5px solid #9a9e9f; }

/* Graphics area */
.canvas { position: relative; min-width: 0; min-height: 0; background: #e6eaed; }
.model { width: 100%; height: 100%; }
.dimension { font: 14px "Liberation Sans", sans-serif; fill: #7a6550; }
.placement { position: absolute; top: 0; left: 3px; width: 268px; height: 93px; padding: 6px 11px; background: #fbfcfc; border: 1px solid #d8dcdd; border-top: 0; }
.dots { display: flex; justify-content: center; gap: 3px; height: 4px; margin-bottom: 24px; }
.dots i { width: 2px; height: 2px; background: #afb3b4; }
.placement label { display: block; height: 21px; }
.pick { display: grid; grid-template-columns: 144px 97px; gap: 2px; }
.pick input { height: 22px; padding: 0 6px; border: 1px solid #b5bab3; background: #e8fddb; }
.pick button { height: 23px; border: 1px solid #b0b4b5; background: #f7f8f8; }
.view-tools { position: absolute; top: 6px; left: 291px; display: flex; align-items: center; height: 32px; padding: 0 1px 0 2px; border: 1px solid #b9bebf; background: #f7fbfc; }
.view-tools button { width: 23px; height: 24px; margin: 0 1px; }
.view-tools button:nth-child(3n) { margin-right: 2px; }
.view-tools .on { border: 1px solid #b1b6b7; background: #dde2e4; }
.view-tools svg { width: 17px; height: 17px; }

/* Status bar */
.status { flex: none; display: flex; align-items: center; height: 34px; padding: 0 0 1px 6px; background: #f8fbfa; border-top: 2px solid #d1d6d7; border-bottom: 1px solid #c6c9ca; }
.status > .on { width: 21px; height: 24px; border: 1px solid #adb2b3; background: #dadfe0; }
.status > button + button { margin-left: 7px; }
.status .rule { height: 24px; }
.status > .rule { margin: 0 2px 0 10px; }
.status > p { padding-left: 2px; white-space: nowrap; }
.selection { margin-left: auto; display: flex; align-items: center; gap: 5px; }
.selection button { gap: 6px; }
.selection .dim { color: #a8acad; margin-right: 3px; }
.double-rule { width: 5px; height: 26px; border: solid #c1c5c6; border-width: 0 1px; }
.count { padding: 0 26px 0 2px; }
.selection select { width: 128px; height: 24px; padding: 0 6px; border: 1px solid #b1b5b6; border-right: 0; border-radius: 0; background: #fafcfc; appearance: none; }

/* Taskbar */
.taskbar { flex: none; display: flex; align-items: flex-start; height: 15px; overflow: hidden; background: linear-gradient(90deg, #eae6e3, #f1ddd6 35%, #eee1db 60%, #ebdcd0); }
.weather { display: flex; gap: 4px; width: 373px; padding: 5px 0 0 25px; }
.weather span { padding-top: 2px; }
.badge { font: 700 11px "Open Sans", sans-serif; fill: #fff; }
.start { margin-top: 7px; }
.search-pill { width: 207px; height: 30px; margin: 8px 4px 0 16px; border-radius: 15px; background: #fbf3ef; }
.apps { display: grid; grid-template-columns: repeat(8, 43px); justify-items: center; padding-top: 7px; }
.apps svg { width: 20px; height: 16px; }
.app-on { margin-top: -4px; padding: 4px 8px 0; border-radius: 4px 4px 0 0; background: #f8f1ec; }
.lang { margin-left: auto; padding: 7px 133px 0 0; }
.clock { width: 19px; padding-top: 7px; white-space: nowrap; }
```
